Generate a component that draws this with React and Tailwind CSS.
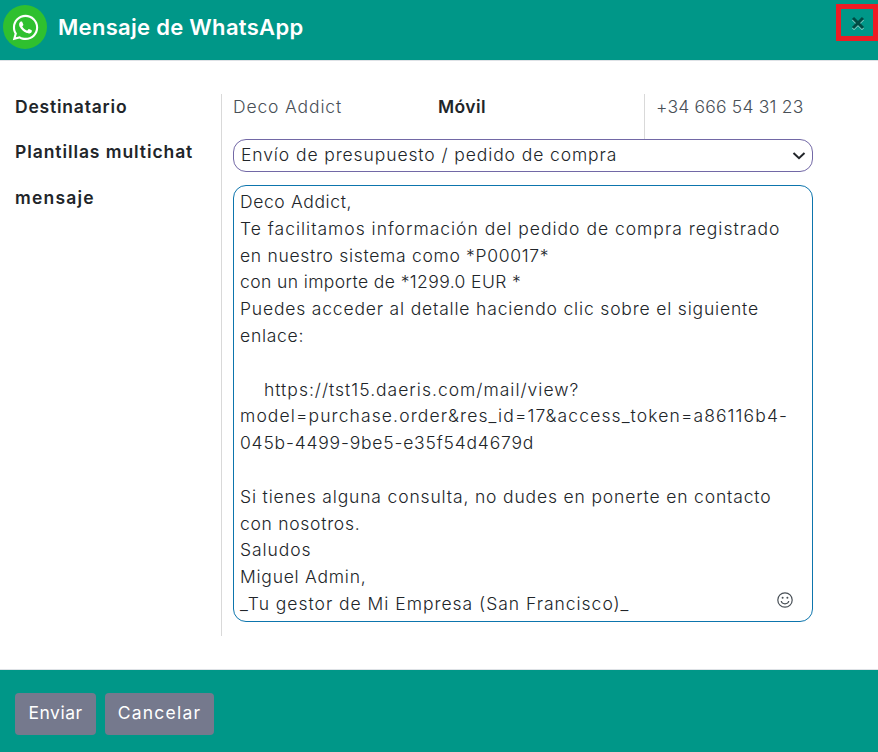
import React from "react";
import { FaWhatsapp } from "react-icons/fa";

const message = [
  ["Deco Addict,", "tracking-[0.62px]"],
  ["Te facilitamos información del pedido de compra registrado", "tracking-[0.99px]"],
  ["en nuestro sistema como *P00017*", "tracking-[0.69px]"],
  ["con un importe de *1299.0 EUR *", "tracking-[0.4px]"],
  ["Puedes acceder al detalle haciendo clic sobre el siguiente", "tracking-[0.82px]"],
  ["enlace:", "tracking-[0.74px]"],
  ["", ""],
  ["https://tst15.daeris.com/mail/view?", "pl-[24px] tracking-[1px]"],
  ["model=purchase.order&res_id=17&access_token=a86116b4-", "tracking-[1.11px]"],
  ["045b-4499-9be5-e35f54d4679d", "tracking-[0.8px]"],
  ["", ""],
  ["Si tienes alguna consulta, no dudes en ponerte en contacto", "tracking-[0.84px]"],
  ["con nosotros.", "tracking-[0.72px]"],
  ["Saludos", "tracking-[0.94px]"],
  ["Miguel Admin,", "tracking-[0.75px]"],
  ["_Tu gestor de Mi Empresa (San Francisco)_", "tracking-[0.98px]"],
];

function Header() {
  return (
    <header className="flex h-[61px] items-start justify-between border-b border-[#dee2e6] bg-[#009788]">
      <div className="flex pt-[5px] pl-[3px]">
        <span className="flex size-[44px] items-center justify-center rounded-full bg-[#2fc02f]">
          <FaWhatsapp className="size-[29px] text-white" />
        </span>
        <h1 className="ml-[11px] text-[22px] leading-[44px] font-semibold tracking-[0.3px] text-white">Mensaje de WhatsApp</h1>
      </div>
      <button className="mt-[4px] flex h-[37px] w-[42px] items-center justify-center border-[5px] border-[#ed1c24]">
        <svg viewBox="0 0 14 14" className="mt-px ml-[2px] size-[14px]" fill="none" strokeWidth="3">
          <path d="M2 3.2 L12 13.2 M12 3.2 L2 13.2" stroke="#7fcbc3" />
          <path d="M2 2 L12 12 M12 2 L2 12" stroke="#004c44" />
        </svg>
      </button>
    </header>
  );
}

export default function App() {
  return (
    <div className="flex h-[752px] w-[878px] flex-col overflow-hidden bg-white font-['Inter',sans-serif] text-[17.5px] text-[#212529]">
      <Header />
      <main className="flex h-[608px] pt-[33px] pl-[15px]">
        <div className="flex h-[542px] w-[207px] flex-col border-r border-[#d9d9d9] font-semibold leading-[26px]">
          <div className="h-[45px]"><span className="tracking-[0.8px]">Destinatario</span></div>
          <div className="h-[46px]"><span className="tracking-[0.92px]">Plantillas multichat</span></div>
          <div><span className="tracking-[1.2px]">mensaje</span></div>
        </div>
        <div className="ml-[11px] flex w-[580px] flex-col">
          <div className="flex h-[45px] leading-[26px]">
            <div className="w-[205px] font-light text-[#495057]"><span className="tracking-[0.85px]">Deco Addict</span></div>
            <div className="w-[207px] border-r border-[#d9d9d9] font-semibold"><span className="tracking-[0.4px]">Móvil</span></div>
            <div className="pl-[11px] font-light text-[#495057]"><span className="tracking-[0.2px]">+34 666 54 31 23</span></div>
          </div>
          <div className="flex h-[33px] items-center justify-between rounded-[13px] border border-[#7268a6] pr-[6px] pl-[7px] font-light">
            <span className="tracking-[0.9px]">Envío de presupuesto / pedido de compra</span>
            <svg viewBox="0 0 14 8" className="h-[8px] w-[14px]" fill="none" stroke="#212529" strokeWidth="2">
              <path d="M1.5 1 L7 6.2 L12.5 1" />
            </svg>
          </div>
          <div className="relative mt-[13px] h-[437px] rounded-[13px] border border-[#0d75ad] pt-[3px] pl-[6px] font-light whitespace-pre">
            {message.map(([text, style], i) => (
              <div key={i} className="h-[26.8px] leading-[26.8px]">
                <span className={style}>{text}</span>
              </div>
            ))}
            <svg viewBox="0 0 16 16" className="absolute right-[19px] bottom-[13px] size-[16px]" fill="none" stroke="#495057" strokeWidth="1.2">
              <circle cx="8" cy="8" r="7.2" />
              <path d="M4.2 9 C5 12.8 11 12.8 11.8 9" />
              <circle cx="5.6" cy="5.8" r="1" fill="#495057" stroke="none" />
              <circle cx="10.4" cy="5.8" r="1" fill="#495057" stroke="none" />
            </svg>
          </div>
        </div>
      </main>
      <footer className="flex flex-1 items-start gap-[9px] border-t border-[#dee2e6] bg-[#009788] pt-[23px] pl-[15px] font-normal text-white">
        <button className="h-[42px] w-[81px] rounded-[4px] bg-[#75798d] pb-px tracking-[0.5px]">Enviar</button>
        <button className="h-[42px] w-[109px] rounded-[4px] bg-[#75798d] pb-px tracking-[1.2px]">Cancelar</button>
      </footer>
    </div>
  );
}
